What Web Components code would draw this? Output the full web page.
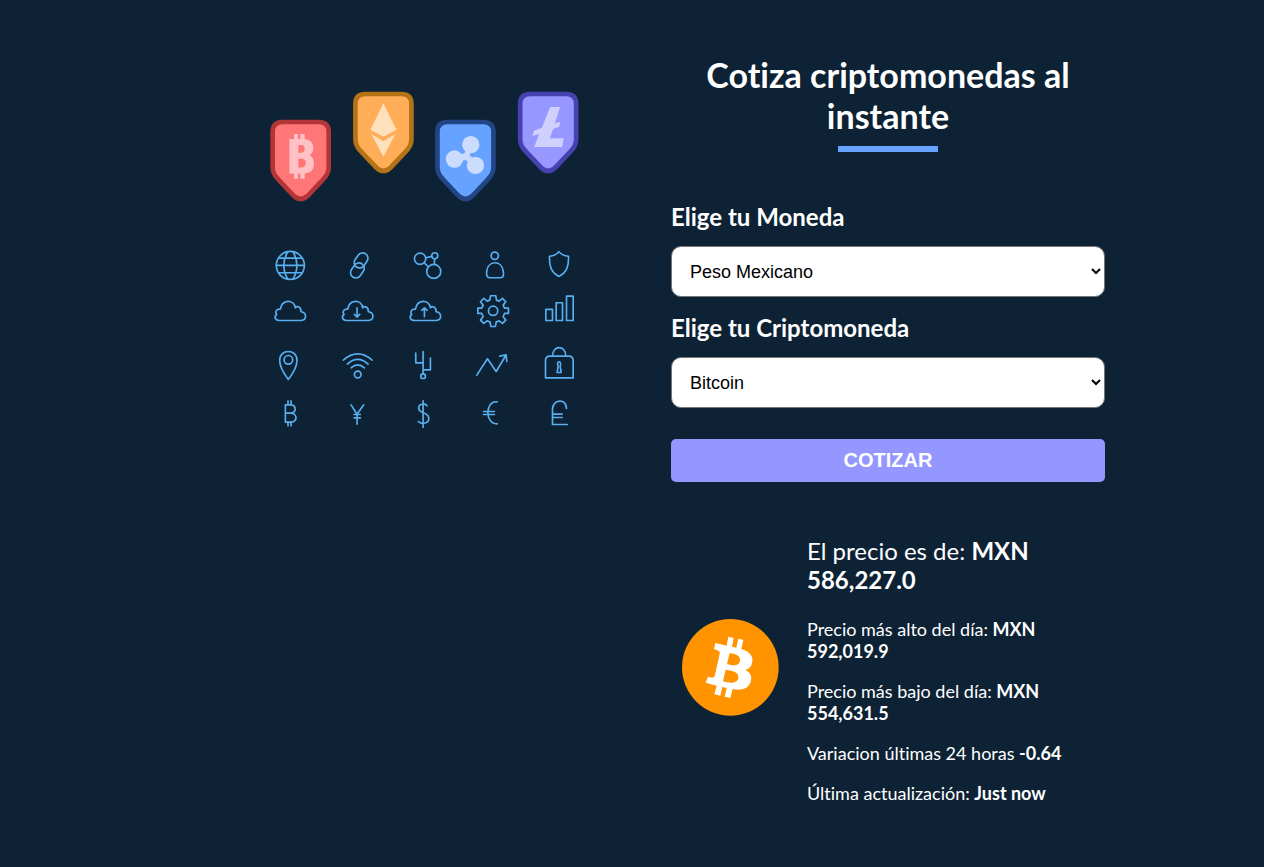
<!DOCTYPE html>
<html lang="es">
<head>
<meta charset="utf-8">
<meta name="viewport" content="width=device-width, initial-scale=1">
<title>Cotizador de Criptomonedas</title>
<style>
  body { margin: 0; background: #0d2235; color: #fff; font-family: Lato, sans-serif; font-size: 18px; font-variant-ligatures: none; }
</style>
</head>
<body>
<quote-page>
  <crypto-art slot="art"></crypto-art>
  <page-title>Cotiza criptomonedas al instante</page-title>
  <quote-form></quote-form>
  <quote-result>
    <coin-logo slot="logo"></coin-logo>
    <span slot="price">El precio es de: <b>MXN 586,227.0</b></span>
    <quote-line>Precio más alto del día: <b>MXN 592,019.9</b></quote-line>
    <quote-line>Precio más bajo del día: <b>MXN 554,631.5</b></quote-line>
    <quote-line>Variacion últimas 24 horas <b>-0.64</b></quote-line>
    <quote-line>Última actualización: <b>Just now</b></quote-line>
  </quote-result>
</quote-page>

<script>
const define = (name, html, setup) => {
  const template = document.createElement('template');
  template.innerHTML = html;
  customElements.define(name, class extends HTMLElement {
    constructor() {
      super();
      this.attachShadow({ mode: 'open' }).append(template.content.cloneNode(true));
    }
    connectedCallback() { if (setup) setup(this); }
  });
};

define('quote-page', `
<style>
  :host { display: block; }
  main { max-width: 900px; margin: 0 auto; padding: 0 0 24px 46px; display: grid; grid-template-columns: repeat(2, minmax(0, 1fr)); column-gap: 32px; align-items: start; }
  @media (max-width: 960px) { main { grid-template-columns: minmax(0, 1fr); padding: 0 24px 24px; } }
</style>
<main><slot name="art"></slot><section><slot></slot></section></main>`);

define('page-title', `
<style>
  :host { display: block; padding-top: 54px; }
  h1 { margin: 0; font-size: 34px; line-height: 41px; font-weight: 700; text-align: center; }
  h1::after { content: ""; display: block; width: 100px; height: 6px; margin: 10px auto 0; background: #66a2fe; }
</style>
<h1><slot></slot></h1>`);

define('select-field', `
<style>
  :host { display: block; margin-bottom: 16px; }
  label { display: block; margin-bottom: 15px; font-size: 24px; line-height: 29px; font-weight: 700; }
  select { display: block; width: 100%; box-sizing: border-box; height: 51px; padding: 14px; border: 1px solid #767676; border-radius: 10px; background: #fff; color: #000; font-family: "Liberation Sans", Arial, sans-serif; font-size: 18px; }
</style>
<label for="field"></label>
<select id="field"></select>`, el => {
  el.shadowRoot.querySelector('label').textContent = el.getAttribute('label');
  const select = el.shadowRoot.querySelector('select');
  select.replaceChildren(...el.getAttribute('options').split(',').map(text => new Option(text)));
});

define('quote-form', `
<style>
  :host { display: block; padding-top: 50px; }
  form { margin: 0; }
  button { display: block; width: 100%; height: 43px; margin-top: 31px; padding: 0; border: 0; border-radius: 5px; background: #9497ff; color: #fff; font-family: "Liberation Sans", Arial, sans-serif; font-size: 20px; font-weight: 700; text-transform: uppercase; cursor: pointer; }
  button:hover { background: #7a7dfe; }
</style>
<form>
  <select-field label="Elige tu Moneda" options="Peso Mexicano,Dolar de Estados Unidos,Euro,Libra Esterlina"></select-field>
  <select-field label="Elige tu Criptomoneda" options="Bitcoin,Ethereum,XRP,Litecoin"></select-field>
  <button type="button">Cotizar</button>
</form>`);

define('quote-result', `
<style>
  :host { display: grid; grid-template-columns: 97px minmax(0, 1fr); column-gap: 28px; align-items: center; margin-top: 30px; padding-left: 11px; }
  .data { display: flow-root; }
  .price { margin: 24px 0; font-size: 24px; line-height: 29px; }
</style>
<slot name="logo"></slot>
<div class="data"><p class="price"><slot name="price"></slot></p><slot></slot></div>`);

define('quote-line', `
<style>
  :host { display: block; margin: 18px 0; }
  p { margin: 0; font-size: 18px; line-height: 22px; }
</style>
<p><slot></slot></p>`);

define('coin-logo', `
<style>:host { display: block; } svg { display: block; width: 100%; }</style>
<svg viewBox="38 39 291 291" role="img" aria-label="Bitcoin">
  <circle cx="183" cy="184" r="145" fill="#ff9400"/>
  <path fill="#fff" fill-rule="evenodd" d="M177 92L193 96L188 122L201 125L207 98L222 101L216 129C239 136 252 149 249 168C247 181 240 189 228 192C243 199 249 211 244 227C237 248 218 254 190 249L183 276L166 272L172 246L159 243L153 269L135 265L142 239L109 230L116 212L129 215Q134 215 136 210L151 144Q153 136 144 133L134 129L138 111L172 119ZM181 141L173 174C194 180 209 180 212 164C214 148 199 144 181 141ZM169 191L161 226C184 232 204 233 207 215C209 197 190 195 169 191Z"/>
</svg>`);

define('crypto-art', `
<style>
  :host { display: block; width: 80%; margin: 84px auto 0; }
  svg { display: block; width: 100%; }
  .icons { fill: none; stroke: #58aff0; stroke-width: 5; stroke-linecap: round; stroke-linejoin: round; }
</style>
<svg viewBox="0 0 1041 1053" role="img" aria-label="Criptomonedas">
  <defs>
    <path id="badge" d="M-54 7H54Q84 7 84 37V142Q84 163 68 178L21 228Q0 247 -21 228L-68 178Q-84 163 -84 142V37Q-84 7 -54 7Z" stroke-width="14"/>
    <path id="cloud" d="M42 241H108C126 241 126 217 108 215C108 200 97 196 91 203C87 177 51 177 46 207C33 206 29 217 35 223C27 228 29 241 42 241Z"/>
  </defs>
  <g transform="translate(36 0)">
    <use href="#badge" x="122" y="107" fill="#ff7676" stroke="#b23637"/>
    <path fill="#ffc1c5" fill-rule="evenodd" d="M88 165H102V150H114V165H121V150H134V165Q160 168 160 191Q160 207 148 213Q162 221 162 239Q162 266 134 268V284H121V268H114V284H102V268H88ZM115 183V206H124Q134 206 134 195Q134 183 124 183ZM115 224V250H124Q137 250 137 237Q137 224 124 224Z"/>
    <use href="#badge" x="370" y="23" fill="#ffae57" stroke="#b57318"/>
    <path fill="#ffe0bd" d="M370 58L409 137L370 158L331 137ZM334 150L370 172L406 150L370 218Z"/>
  </g>
  <g transform="translate(531 0)">
    <use href="#badge" x="121" y="107" fill="#66a2ff" stroke="#224584"/>
    <g fill="#ccdcff"><circle cx="137" cy="182" r="26"/><circle cx="88" cy="225" r="26"/><circle cx="151" cy="244" r="26"/></g>
    <path fill="#ccdcff" d="M119 194Q125 210 108 210L108 234Q121 223 128 233L142 218Q128 218 138 203Z"/>
    <use href="#badge" x="369" y="23" fill="#9697ff" stroke="#4742b0"/>
    <path fill="#d0d0ff" d="M375 69H405L389 118L406 113L402 128L384 135L374 163H416L411 189H327L342 150L322 156L326 140L350 131Z"/>
  </g>
  <g class="icons">
    <g transform="translate(51 468)">
      <circle cx="76" cy="76" r="42"/><path d="M34 76H118M42 54H110M42 98H110M68 35C53 62 53 91 68 117M84 35C99 62 99 91 84 117"/>
      <rect x="-24" y="-16" width="48" height="32" rx="16" transform="translate(288 61) rotate(-55)"/><rect x="-24" y="-16" width="48" height="32" rx="16" transform="translate(277 91) rotate(-55)"/>
      <use href="#cloud"/><use href="#cloud" x="202"/><path d="M276 203V231M268 223L276 231L284 223"/>
    </g>
    <g transform="translate(471 468)">
      <circle cx="45" cy="56" r="17"/><circle cx="89" cy="47" r="9"/><circle cx="86" cy="94" r="21"/><path d="M62 53L80 49M57 68L70 80M88 56V73"/>
      <use href="#cloud" x="-15"/><path d="M58 230V203M50 211L58 203L66 211"/>
    </g>
    <g transform="translate(531 468)">
      <circle cx="209" cy="47" r="11"/><path d="M194 113H226C237 113 236 101 234 92C229 60 190 60 185 92C184 101 183 113 194 113Z"/>
      <path d="M401 35Q412 47 430 49C431 79 425 97 401 109C378 97 372 79 373 49Q391 47 401 35Z"/>
      <path d="M196 167H212L214 180L222 183L232 175L242 185L234 195L238 204H250V220H238L234 230L242 240L232 250L222 242L213 246L211 259H197L195 246L186 242L176 250L166 240L174 230L170 220H158V204H170L174 195L166 185L176 175L186 183L194 180Z"/><circle cx="204" cy="212" r="14"/>
      <path d="M362 208H382V241H362ZM393 188H412V241H393ZM424 168H444V241H424Z"/>
    </g>
    <g transform="translate(51 768)">
      <path d="M70 118C58 102 44 81 44 61C44 25 96 25 96 61C96 81 82 102 70 118Z"/><circle cx="70" cy="59" r="13"/>
      <circle cx="278" cy="103" r="10"/><path d="M235 60Q278 23 321 60M247 72Q278 44 309 72M258 83Q278 66 298 83"/>
      <path d="M61 194V246H78C98 246 98 219 77 219H61M61 194H76C95 194 95 219 77 219M69 194V182M78 194V182M69 246V257M78 246V257"/>
      <path d="M258 194L276 222L296 194M276 222V252M267 223H286M267 233H286"/>
    </g>
    <g transform="translate(471 768)">
      <path d="M54 34V100M32 39V68H54M76 54V89H54"/><circle cx="54" cy="108" r="7"/>
      <path d="M54 182V262M66 197C58 187 39 191 41 206C43 220 69 216 71 233C73 251 50 253 40 244"/>
    </g>
    <g transform="translate(531 768)">
      <path d="M155 105L187 56L213 94L242 46M224 48L243 44L245 64"/>
      <path d="M361 113V62Q361 48 374 48H431Q444 48 444 62V113ZM382 48C382 14 422 14 422 48"/><path d="M396 97L399 79C391 60 412 60 405 79L408 97Z"/>
      <path d="M216 185C179 181 179 252 216 251M175 214H208M175 223H208"/>
      <path d="M424 205C424 173 382 177 382 207V253H426M382 222H411M382 232H411"/>
    </g>
  </g>
</svg>`);
</script>
</body>
</html>
